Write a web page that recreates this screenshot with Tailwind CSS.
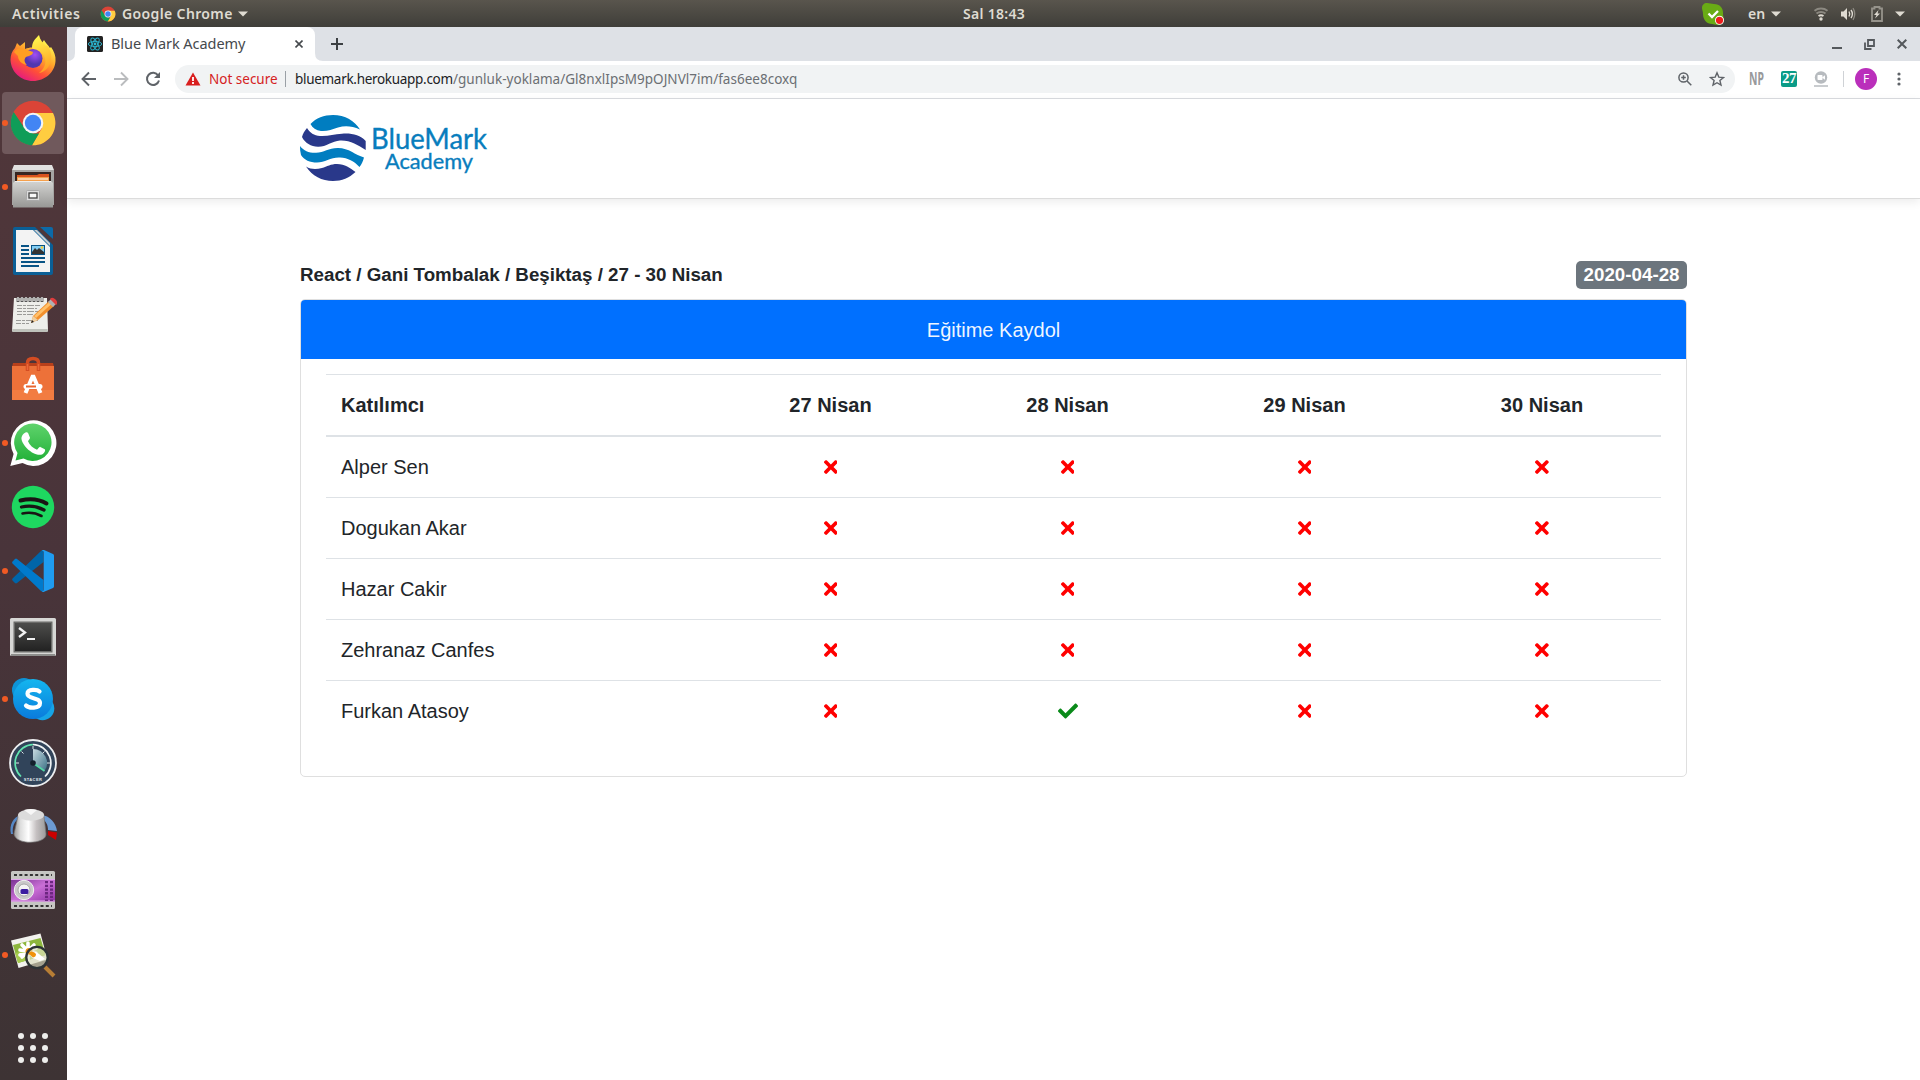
<!DOCTYPE html>
<html lang="tr">
<head>
<meta charset="utf-8">
<title>Blue Mark Academy</title>
<script src="https://cdn.jsdelivr.net/npm/@tailwindcss/browser@4"></script>
</head>
<body class="w-[1920px] h-[1080px] overflow-hidden flex flex-col bg-white">

<!-- System bar -->
<header class="h-[27px] shrink-0 flex items-center bg-linear-to-b from-[#59554d] to-[#3f3e39] text-[#dfdbd2] text-[14px] leading-[27px] font-semibold font-['Noto_Sans',sans-serif] whitespace-nowrap">
  <div class="w-[100px] pl-3"><span class="tracking-[0.6px]">Activities</span></div>
  <div class="w-[863px] flex items-center">
    <svg class="w-4 h-4 mr-[6px]" viewBox="0 0 48 48"><use href="#chrome"/></svg>
    <span class="w-[116px] tracking-[0.37px]">Google Chrome</span>
    <svg class="w-[10px] h-[6px]" viewBox="0 0 10 6"><path d="M0 0.500h10L5 5.500z" fill="#dfdbd2"/></svg>
  </div>
  <div class="w-[739px]"><span class="tracking-[0.3px]">Sal 18:43</span></div>
  <svg class="w-[22px] h-[22px] mr-6" viewBox="0 0 22 22"><path d="M5 0c3 0 4 1 7 1 6 0 9 4 9 9 0 4 1 5 1 7 0 3-3 5-6 5s-4-1-6-1C5 21 1 17 1 11 1 8 0 7 0 5c0-3 2-5 5-5z" fill="#69ab15"/><path d="M6.500 10.500l3.500 3.500 6-6" stroke="#fff" stroke-width="2.300" fill="none"/><circle cx="17.500" cy="17.300" r="4.500" fill="#fff"/><circle cx="17.500" cy="17.300" r="3.600" fill="#ee1c1c"/></svg>
  <span class="w-[23px]">en</span>
  <svg class="w-[10px] h-[6px] mr-[33px]" viewBox="0 0 10 6"><path d="M0 0.500h10L5 5.500z" fill="#dfdbd2"/></svg>
  <svg class="w-[14px] h-[14px] mr-[13px]" viewBox="0 0 14 14" fill="none" stroke-width="2"><path d="M.5 3.800C4 .8 10 .8 13.500 3.800M2.500 6.500C5 4.500 9 4.500 11.500 6.500" stroke="#8c8981"/><path d="M4.500 9Q7 7.500 9.500 9" stroke="#dfdbd2"/><circle cx="7" cy="12" r="1.700" fill="#dfdbd2"/></svg>
  <svg class="w-[15px] h-[14px] mr-[15px]" viewBox="0 0 15 14" fill="none"><path d="M0 4.500h2.500L6 1v12L2.500 9.500H0z" fill="#dfdbd2"/><path d="M8 4.500q1.500 2.500 0 5M10 3q2.800 4 0 8" stroke="#dfdbd2" stroke-width="1.400"/><path d="M12 1.200q3.500 5.800 0 11.600" stroke="#8c8981" stroke-width="1.300"/></svg>
  <svg class="w-3 h-4 mr-[12px]" viewBox="0 0 12 16"><path d="M3.500 1h5v1.500H11V15H1V2.500h2.500z" stroke="#96938b" stroke-width="1.800" fill="none"/><path d="M7.500 4L3 9h2.500L4 12.500 9 7.500H6.500z" fill="#dfdbd2"/></svg>
  <svg class="w-[10px] h-[6px]" viewBox="0 0 10 6"><path d="M0 0.500h10L5 5.500z" fill="#dfdbd2"/></svg>
</header>

<div class="flex flex-1 min-h-0">

<!-- Launcher -->
<nav class="w-[67px] shrink-0 flex flex-col bg-linear-to-b from-[#51373a] via-[#49343a] to-[#3d3334]">
  <!-- Firefox -->
  <div class="h-16 pl-[9px] flex items-center"><svg class="w-12 h-12" viewBox="0 0 48 48">
    <defs>
      <linearGradient id="ff1" x1=".85" y1=".1" x2=".25" y2="1"><stop stop-color="#fff44f"/><stop offset=".35" stop-color="#ffa62b"/><stop offset=".65" stop-color="#ff5037"/><stop offset="1" stop-color="#e31587"/></linearGradient>
      <linearGradient id="ff2" x1=".4" y1="0" x2=".6" y2="1"><stop stop-color="#fff84e"/><stop offset="1" stop-color="#ff9b22"/></linearGradient>
      <radialGradient id="ff3" cx=".6" cy=".3"><stop stop-color="#a24df5"/><stop offset="1" stop-color="#5137b0"/></radialGradient>
    </defs>
    <path d="M6 13L8 8l3 3 5-4v7c5-2 9-2 13 0l6-9c1 2 4 5 6 8l1-1c3 4 5 9 4.500 14C46 37 36 46 24 46S2 37 1.500 25C1.500 20 3 16 6 13z" fill="url(#ff1)"/>
    <path d="M23 13c0-6 3-9 7-13 1 5 4 8 7 11l1-1c3 4 5 9 4 15-1 7-6 12-12 13 7-5 9-14 3-20-3-3-8-3-10-5z" fill="url(#ff2)"/>
    <circle cx="24" cy="23.500" r="9.500" fill="url(#ff3)"/>
    <path d="M5 17c2-4 7-4 11-3l8 3c0 3-4 4-7 5-2 2-2 5 1 8-6-1-9-5-9-9z" fill="#ff9d22"/>
  </svg></div>
  <!-- Chrome -->
  <div class="h-16 flex items-center pl-[2px]"><div class="relative w-[62px] h-[62px] rounded bg-[#70595c] flex items-center pl-[7px]">
    <i class="absolute left-0 w-[5.500px] h-[5.500px] rounded-full bg-[#f15a24]"></i>
    <svg class="w-12 h-12" viewBox="0 0 48 48"><g id="chrome">
      <circle cx="24" cy="24" r="22.300" fill="#db4437"/>
      <path d="M24 14h20a22.300 22.300 0 0 1-21 32.300L33 29z" fill="#ffcd40"/>
      <path d="M4.700 12.900L15.400 29 24 34.500h6L23 46.300A22.300 22.300 0 0 1 4.700 12.900z" fill="#0f9d58"/>
      <circle cx="24" cy="24" r="10.300" fill="#f5f5f5"/><circle cx="24" cy="24" r="8.200" fill="#4285f4"/>
    </g></svg></div></div>
  <!-- Files -->
  <div class="relative h-16 pl-[9px] flex items-center"><i class="absolute left-[2px] w-[5.500px] h-[5.500px] rounded-full bg-[#f15a24]"></i>
  <svg class="w-12 h-12" viewBox="0 0 48 48">
    <defs><linearGradient id="steel" x1="0" y1="0" x2="0" y2="1"><stop stop-color="#d4d4d2"/><stop offset="1" stop-color="#979795"/></linearGradient></defs>
    <path d="M5 2h38l2 5H3z" fill="#e2e2e0"/><path d="M3 7h42v35H3z" fill="#a5a5a3"/>
    <path d="M6 9h36v11H6z" fill="#372622"/><path d="M8 12h20l2-1h10v4H8z" fill="#d9531e"/><path d="M8 14h32v5H8z" fill="#f5a04c"/><path d="M9 15.500h30v1H9z" fill="#fff"/>
    <path d="M6 18h36l2 2v24.500H4V20z" fill="url(#steel)"/><path d="M6 18.500h36" stroke="#eee"/>
    <rect x="17.500" y="27.500" width="13" height="10" rx="1" fill="#ddd" stroke="#aaa"/><rect x="20" y="30" width="8" height="5" fill="#f8f8f8" stroke="#444" stroke-width="1.300"/>
  </svg></div>
  <!-- Writer -->
  <div class="h-16 pl-[9px] flex items-center"><svg class="w-12 h-12" viewBox="0 0 48 48">
    <path d="M6 0h20l18 18v28a2 2 0 0 1-2 2H6a2 2 0 0 1-2-2V2a2 2 0 0 1 2-2z" fill="#0a5f96"/><path d="M31 0h11a2 2 0 0 1 2 2v10z" fill="#0c6aa8"/>
    <path d="M7 3h17l17 17v25H7z" fill="#f3f3f3"/><path d="M25 3l16 16v-3L28 3z" fill="#c9cdd0"/>
    <path d="M12 19h8M12 23h8M12 27h8M12 31h24M12 35h24M12 39h18" stroke="#085385" stroke-width="2"/>
    <rect x="22.500" y="18.500" width="13" height="9" fill="#83cdf3" stroke="#085385"/><path d="M23 27v-2l3-4 2 2 2-2 5 4v2z" fill="#333"/><circle cx="33" cy="20.500" r="1.300" fill="#fc3"/>
  </svg></div>
  <!-- Text editor -->
  <div class="h-16 pl-[9px] flex items-center"><svg class="w-12 h-12" viewBox="0 0 48 48">
    <path d="M5 7h33l1 33H3z" fill="#edeeea"/><path d="M3.200 38h35.600v3H3.200z" fill="#bfc2bb"/>
    <path d="M9 6v5M13 6v5M17 6v5M21 6v5M25 6v5M29 6v5M33 6v5" stroke="#555" stroke-width="2.800"/><path d="M9 6v4M13 6v4M17 6v4M21 6v4M25 6v4M29 6v4M33 6v4" stroke="#d9d9d9" stroke-width="1.400"/>
    <path d="M8 14.500h24M8 17.500h20M8 20.500h22M8 23.500h16M7 29.500h22M7 32.500h13" stroke="#9b9b98" stroke-width="1" stroke-dasharray="5 1 3 1 7 1"/>
    <path d="M22 32l2-7L40 10l5 5-16 14z" fill="#f28f2c"/><path d="M25 25L40.500 11l2 2L27 27z" fill="#ffc06a"/><path d="M22 32l2-7 5 4z" fill="#efcfa0"/><path d="M22 32l1-3 2 2z" fill="#222"/>
    <path d="M39 11l3-3 5 5-3 3z" fill="#aeb1b3"/><path d="M42 8c2-2 7 3 5 5z" fill="#e03d3d" stroke="#e03d3d" stroke-width="1.500"/>
  </svg></div>
  <!-- Software -->
  <div class="h-16 pl-[9px] flex items-center"><svg class="w-12 h-12" viewBox="0 0 48 48">
    <path d="M4 8h40l1 4H3z" fill="#b8401b"/><path d="M3 11h42v34H3z" fill="#ed7139"/><path d="M3 35h42v10H3z" fill="#f27c41"/>
    <path d="M18.500 16V8q0-4.500 5.500-4.500T29.500 8v8" stroke="#d34c22" stroke-width="3.500" fill="none"/><path d="M18.500 15V9M29.500 15V9" stroke="#e9683a" stroke-width="1.500"/>
    <path d="M16.500 38L24 20.500 31.500 38" stroke="#fff" stroke-width="4" fill="none" stroke-linejoin="bevel"/><rect x="14.500" y="29" width="19" height="5" rx="2.500" fill="#fff"/><path d="M17 31.500h10" stroke="#e8652f" stroke-width="2"/>
  </svg></div>
  <!-- WhatsApp -->
  <div class="relative h-16 pl-[9px] flex items-center"><i class="absolute left-[2px] w-[5.500px] h-[5.500px] rounded-full bg-[#f15a24]"></i>
  <svg class="w-12 h-12" viewBox="0 0 48 48">
    <defs><linearGradient id="wa" x1="0" y1="0" x2="0" y2="1"><stop stop-color="#5fd36c"/><stop offset="1" stop-color="#23b139"/></linearGradient></defs>
    <path d="M1.300 47l3.300-12A22.800 22.800 0 1 1 13.500 44z" fill="#fff"/><path d="M6.500 41.500l2-7.500A18.700 18.700 0 1 1 14.500 39.500z" fill="url(#wa)"/>
    <path d="M16.500 13.500c1-.4 2.200-.3 2.700.8l1.800 4.500c.3.900-1.800 2.700-2 3.500 1.600 4 5.200 7 9 8.400 1-.3 2.200-3.200 3.300-2.800l4.500 2.300c1 .8-.2 4.200-2.800 5.200-2.300 1-6 .2-10-2-5-2.800-10-9-10.500-13.300-.2-3 1.800-5.800 4-6.600z" fill="#fff"/>
  </svg></div>
  <!-- Spotify -->
  <div class="h-16 pl-[9px] flex items-center"><svg class="w-12 h-12" viewBox="0 0 48 48">
    <circle cx="24" cy="24" r="21.200" fill="#1ed760"/><g fill="none" stroke="#191414" stroke-linecap="round"><path d="M11.500 17.500q15-3.500 26 3" stroke-width="4"/><path d="M12.500 24q12.500-2.500 22.500 3" stroke-width="3.300"/><path d="M13.500 30.500q10.500-2.200 19 2.500" stroke-width="2.600"/></g>
  </svg></div>
  <!-- VS Code -->
  <div class="relative h-16 pl-[9px] flex items-center"><i class="absolute left-[2px] w-[5.500px] h-[5.500px] rounded-full bg-[#f15a24]"></i>
  <svg class="w-12 h-12" viewBox="0 0 48 48">
    <path d="M34.500 3v12L8 36a1.500 1.500 0 0 1-2 0l-2.500-2.500a1.500 1.500 0 0 1 0-2L32 4z" fill="#0065a9"/>
    <path d="M34.500 45V33L8 12a1.500 1.500 0 0 0-2 0l-2.500 2.500a1.500 1.500 0 0 0 0 2L32 44z" fill="#007acc"/>
    <path d="M34.500 45c-1 0-2-.500-2.500-1 1 1 2.700 0 2.700-1.300V5.300C34.700 4 33 3 32 4c.5-.5 1.500-1.300 3-1l9 4c.6.300 1 1 1 1.800v30.400c0 .8-.4 1.500-1 1.800z" fill="#1f9cf0"/>
  </svg></div>
  <!-- Terminal -->
  <div class="h-16 pl-[9px] flex items-center"><svg class="w-12 h-12" viewBox="0 0 48 48">
    <defs><linearGradient id="tm" x1="0" y1="0" x2="0" y2="1"><stop stop-color="#4d4d4b"/><stop offset="1" stop-color="#222"/></linearGradient></defs>
    <rect x="1" y="7" width="46" height="38" rx="1.500" fill="#d7d7d5"/><path d="M2 43h44v2H2z" fill="#8d8d8b"/><rect x="4.500" y="10.500" width="39" height="31" fill="#6b6b69"/><rect x="6" y="12" width="36" height="28" fill="url(#tm)"/>
    <path d="M10 17l6 4.500-6 4.500" fill="none" stroke="#f2f2f2" stroke-width="2.300"/><path d="M18 28h8" stroke="#f2f2f2" stroke-width="2"/>
  </svg></div>
  <!-- Skype -->
  <div class="relative h-16 pl-[9px] flex items-center"><i class="absolute left-[2px] w-[5.500px] h-[5.500px] rounded-full bg-[#f15a24]"></i>
  <svg class="w-12 h-12" viewBox="0 0 48 48">
    <defs><linearGradient id="sk" x1="0" y1="0" x2="0" y2="1"><stop stop-color="#14b6ef"/><stop offset="1" stop-color="#0a7bdc"/></linearGradient></defs>
    <circle cx="15" cy="15" r="12" fill="#0e93d6"/><circle cx="33.500" cy="33.500" r="11.800" fill="#16a4e6"/><circle cx="24" cy="24" r="20" fill="url(#sk)"/>
    <path d="M30.500 16.500c-2-2-12-3-12 2.300 0 5.700 12.500 3 12.500 9.200 0 6-11.500 5.300-14 2.500" fill="none" stroke="#fff" stroke-width="4.200" stroke-linecap="round"/>
  </svg></div>
  <!-- Stacer -->
  <div class="h-16 pl-[9px] flex items-center"><svg class="w-12 h-12" viewBox="0 0 48 48">
    <defs><linearGradient id="st" x1="0" y1="0" x2="1" y2="1"><stop stop-color="#c9dbe2"/><stop offset="1" stop-color="#3c7186"/></linearGradient></defs>
    <circle cx="24" cy="24" r="23" fill="#31445a" stroke="#eceef0" stroke-width="1.800"/>
    <path d="M24 24V10a14 14 0 0 1 11.500 22z" fill="url(#st)"/>
    <path d="M12 37.500A18.500 18.500 0 0 1 24 5.500" stroke="#62e5b0" stroke-width="1.700" fill="none"/><path d="M24 5.500A18.500 18.500 0 0 1 36 37.500" stroke="#eef2f4" stroke-width="1.700" fill="none"/>
    <path d="M24 7v3M7 24h3M41 24h-3M12.500 12.500l2 2M35.500 12.500l-2 2" stroke="#dfe6ea" stroke-width="1"/><path d="M24 24l11.500 8" stroke="#53d6a5" stroke-width="1.700"/><circle cx="24" cy="24" r="2.800" fill="#14202c"/>
    <text x="24" y="41.500" text-anchor="middle" font-family="Liberation Sans, sans-serif" font-weight="700" font-size="4" letter-spacing=".4" fill="#e2e8ec">STACER</text>
  </svg></div>
  <!-- Volume knob -->
  <div class="h-16 pl-[9px] flex items-center"><svg class="w-12 h-12" viewBox="0 0 48 48">
    <defs><linearGradient id="kn"><stop stop-color="#959595"/><stop offset=".2" stop-color="#ddd"/><stop offset=".45" stop-color="#fff"/><stop offset=".7" stop-color="#c5c0c1"/><stop offset="1" stop-color="#9a9a9a"/></linearGradient></defs>
    <path d="M2 31C0 22 4 14 12 12l-1 3C5 18 3 24 4 31z" fill="#5688c5"/><path d="M33 12c8 1 14 8 15 16l-9-1c0-5-2-9-6-11z" fill="#6c9ad2"/><path d="M39 28l9 1.500-1 7.500-8-5z" fill="#cc0000"/>
    <path d="M9 13c1-7 26-9 26 0l2 18c1 10-30 12-32 0z" fill="url(#kn)" stroke="#777" stroke-width=".7"/><ellipse cx="22" cy="12" rx="13" ry="5.800" fill="#dcdcdc"/><path d="M22 12l-7-5q7-2 13 0z" fill="#f7f7f7"/>
  </svg></div>
  <!-- Screen recorder -->
  <div class="h-16 pl-[9px] flex items-center"><svg class="w-12 h-12" viewBox="0 0 48 48">
    <defs><linearGradient id="rec" x1="0" y1="0" x2="1" y2="1"><stop stop-color="#773291"/><stop offset=".5" stop-color="#ca6fd6"/><stop offset="1" stop-color="#8f34a5"/></linearGradient></defs>
    <rect x="2" y="4" width="44" height="38" rx="1.500" fill="#c6c6c3"/><path d="M5 8h38M5 39h38" stroke="#333" stroke-width="2" stroke-dasharray="3 2.300"/>
    <path d="M2 12h44v22.500H2z" fill="url(#rec)"/><path d="M2 12.500h44M2 34h44" stroke="#e3a8ed" stroke-width="1"/>
    <path d="M37.500 14v20M42.500 14v20" stroke="#6c2680" stroke-width="3" stroke-dasharray="2.300 1.400"/>
    <circle cx="15" cy="23" r="9.700" fill="#c9c9c9" stroke="#f2f2f2" stroke-width="1"/><circle cx="15" cy="23" r="6" fill="#f4f4f4" stroke="#999" stroke-width=".8"/><rect x="11.500" y="22" width="8" height="5" rx="1.500" fill="#3b1ca0"/>
  </svg></div>
  <!-- Image viewer -->
  <div class="relative h-16 pl-[9px] flex items-center"><i class="absolute left-[2px] w-[5.500px] h-[5.500px] rounded-full bg-[#f15a24]"></i>
  <svg class="w-12 h-12" viewBox="0 0 48 48">
    <path d="M2 9.500L31.500 2.500l7 26L9.500 37z" fill="#f2f2ee"/><path d="M4 14L31.500 7l5 17L9 32z" fill="#8cb63c"/><path d="M6 22l28-6 2.500 8L9 32z" fill="#a5cb4e"/>
    <g stroke="#fff" stroke-width="3.600" stroke-linecap="round"><path d="M11 19l16 3M13 14l12 12M19 12v18M25 14L13 26M11 24l16-7"/></g><circle cx="20" cy="20.500" r="3.500" fill="#f0920b"/>
    <path d="M36 36l9 9" stroke="#b77e35" stroke-width="4"/><circle cx="28" cy="26.500" r="10.500" fill="#d9dbbd" fill-opacity=".65"/><path d="M20 22q6-3 10 1l6 5-5 2-7-3z" fill="#fff"/><path d="M19 22q5-3 8 1 0 3-3 3.500z" fill="#f0920b"/><circle cx="28" cy="26.500" r="10.700" fill="none" stroke="#2c3335" stroke-width="2.300"/>
  </svg></div>
  <!-- App grid -->
  <svg class="w-[30px] h-[30px] ml-[18px] mt-[46px]" viewBox="0 0 30 30" fill="#eeeeec"><circle cx="3" cy="3" r="3"/><circle cx="15" cy="3" r="3"/><circle cx="27" cy="3" r="3"/><circle cx="3" cy="15" r="3"/><circle cx="15" cy="15" r="3"/><circle cx="27" cy="15" r="3"/><circle cx="3" cy="27" r="3"/><circle cx="15" cy="27" r="3"/><circle cx="27" cy="27" r="3"/></svg>
</nav>

<!-- Browser window -->
<main class="flex-1 min-w-0 flex flex-col">
  <!-- Tab strip -->
  <div class="h-[34px] shrink-0 flex items-stretch bg-[#dee1e6] pr-[13px] font-['Noto_Sans',sans-serif]">
    <svg class="w-2 h-[34px]" viewBox="0 0 8 34"><path d="M0 34q8 0 8-8v8z" fill="#fff"/></svg>
    <div class="w-[240px] h-[34px] bg-white rounded-t-lg pl-3 flex items-center">
      <svg class="w-4 h-4 mr-2" viewBox="0 0 16 16"><rect width="16" height="16" rx="1.500" fill="#222"/><g fill="none" stroke="#2bb7d3" stroke-width=".9"><ellipse cx="8" cy="8" rx="6.700" ry="2.600"/><ellipse cx="8" cy="8" rx="6.700" ry="2.600" transform="rotate(60 8 8)"/><ellipse cx="8" cy="8" rx="6.700" ry="2.600" transform="rotate(120 8 8)"/></g><circle cx="8" cy="8" r="1.400" fill="#2bb7d3"/></svg>
      <span class="w-[184px] text-[14.500px] text-[#45494d] tracking-[-0.05px] whitespace-nowrap">Blue Mark Academy</span>
      <svg class="w-2 h-2 shrink-0" viewBox="0 0 8 8"><path d="M.5.5l7 7m0-7l-7 7" stroke="#45494d" stroke-width="1.600"/></svg>
    </div>
    <svg class="w-2 h-[34px]" viewBox="0 0 8 34"><path d="M0 26q0 8 8 8H0z" fill="#fff"/></svg>
    <svg class="w-3 h-3 ml-2 self-center" viewBox="0 0 12 12"><path d="M6 0v12M0 6h12" stroke="#3c4043" stroke-width="2"/></svg>
    <div class="ml-auto flex items-center gap-[22px]">
      <svg class="w-[10px] h-[10px]" viewBox="0 0 10 10"><path d="M0 9h10" stroke="#54585c" stroke-width="2"/></svg>
      <svg class="w-[11px] h-[11px]" viewBox="0 0 11 11" fill="none" stroke="#54585c" stroke-width="1.800"><path d="M4 1h6v6H4zM1 3.500V10h6.500"/></svg>
      <svg class="w-[10px] h-[10px]" viewBox="0 0 10 10"><path d="M.7.7l8.600 8.600m0-8.600L.7 9.300" stroke="#54585c" stroke-width="2"/></svg>
    </div>
  </div>
  <!-- Address bar -->
  <div class="h-[38px] shrink-0 flex items-center border-b border-[#dadce0] pl-[14px] pb-px font-['Noto_Sans',sans-serif]">
    <svg class="w-4 h-4 mr-4" viewBox="0 0 16 16" fill="none" stroke="#5f6368" stroke-width="1.900"><path d="M15 8H2M8 1.500L1.500 8 8 14.500"/></svg>
    <svg class="w-4 h-4 mr-4" viewBox="0 0 16 16" fill="none" stroke="#babcbe" stroke-width="1.900"><path d="M1 8h13M8 1.500L14.500 8 8 14.500"/></svg>
    <svg class="w-4 h-4 mr-[14px]" viewBox="0 0 16 16"><path d="M13.200 4.500A6.100 6.100 0 1 0 14 9.500" fill="none" stroke="#5f6368" stroke-width="2"/><path d="M15 1v6H9z" fill="#5f6368"/></svg>
    <div class="w-[1560px] h-7 rounded-full bg-[#f1f3f4] pl-[10px] pr-[10px] flex items-center text-[13.500px] whitespace-nowrap">
      <svg class="w-4 h-[14px] mr-2" viewBox="0 0 16 14"><path d="M8 .5L15.500 13.500H.5z" fill="#d91f1f"/><path d="M8 5v4M8 10v2" stroke="#fff" stroke-width="1.800"/></svg>
      <span class="w-[76px] text-[#d5221f]">Not secure</span>
      <i class="w-px h-4 bg-[#9aa0a6] mr-[9px]"></i>
      <span class="w-[158px] text-[#202124] tracking-[-0.3px]">bluemark.herokuapp.com</span><span class="text-[#6b6f73] tracking-[0.02px]">/gunluk-yoklama/Gl8nxlIpsM9pOJNVl7im/fas6ee8coxq</span>
      <svg class="w-[14px] h-[14px] ml-auto mr-[17px]" viewBox="0 0 14 14" fill="none" stroke="#5f6368" stroke-width="1.500"><circle cx="5.500" cy="5.500" r="4.600"/><path d="M9 9l4.300 4.300M3.200 5.500h4.600M5.500 3.200v4.600"/></svg>
      <svg class="w-4 h-4" viewBox="0 0 16 16"><path d="M8 1.800l1.800 4.300 4.700.4-3.600 3 1.100 4.600L8 11.700l-4 2.400 1.100-4.600-3.600-3 4.700-.4z" fill="none" stroke="#5f6368" stroke-width="1.400"/></svg>
    </div>
    <span class="w-[16px] ml-[14px] mr-4 text-[17px] leading-6 font-bold text-[#98999b]"><span class="inline-block origin-left scale-x-[0.61]">NP</span></span>
    <span class="w-4 h-4 rounded-xs bg-[#0b9b87] text-white text-[15px] leading-[14px] font-bold text-center tracking-[-0.500px] font-['Liberation_Serif',serif]">27</span>
    <svg class="w-4 h-4 ml-4" viewBox="0 0 16 16"><circle cx="8" cy="6.500" r="6.200" fill="#b7bbbf"/><rect x="4.500" y="4" width="5" height="5" rx=".8" fill="#fff"/><path d="M9 6.500l3-2.200v4.400z" fill="#fff"/><path d="M1 15h14" stroke="#b7bbbf" stroke-width="1.500"/></svg>
    <i class="w-px h-4 bg-[#cfd2d6] ml-[14px] mr-[11px]"></i>
    <span class="w-[22px] h-[22px] rounded-full bg-[#ba2fbb] text-white text-[12px] leading-[22px] text-center">F</span>
    <svg class="w-1 h-[14px] ml-5" viewBox="0 0 4 14" fill="#5f6368"><circle cx="2" cy="2" r="1.600"/><circle cx="2" cy="7" r="1.600"/><circle cx="2" cy="12" r="1.600"/></svg>
  </div>

  <!-- Page -->
  <div class="flex-1 min-h-0 flex flex-col text-[#212529] font-['Liberation_Sans',Arial,sans-serif]">
    <div class="h-[100px] shrink-0 border-b border-[#dcdcdc] shadow-[0_3px_9px_rgba(0,0,0,0.08)] pl-[233px] pt-4">
      <svg class="w-[190px] h-[67px]" viewBox="0 0 190 67">
        <g>
          <path d="M10.500 9C16 3 24 0 33 0c12 0 22 6 27 14.500C52 11 45 10.500 38 12.500c-6 2-11 4-17 3.500C16 15.500 12.500 13 10.500 9z" fill="#007dc0"/>
          <path d="M7 13c3 5 7 7.500 13 8 8 .5 14-2 22-2.300C52 18 60 20 65.700 26v9C58 30 50 25 40 25.500c-8 .5-14 6.500-22 6.300C11 31.500 5 28 2 22 3 18.500 4.500 16 7 13z" fill="#29388a"/>
          <path d="M0 31c4 5 9 7 16 6.800 8-.2 13-5 22-4.800 11 0 17 7 26 9.500-1 4-2.500 7-4.500 9.500C54 46 48 43 40 42.500c-9-.5-15 5-23 5C10 47.500 4 45 1 40 .2 37 0 34 0 31z" fill="#007dc0"/>
          <path d="M6 51.500c5 3 10 3 16 1.500 5-1.500 9-4 15-4 8 0 13 4 18.500 8C49 63 42 66 33 66c-11 0-21-5-27-14.500z" fill="#29388a"/>
        </g>
        <g fill="#087dbd" stroke="#087dbd" stroke-width=".35" font-family="Lato, sans-serif">
          <text x="71" y="34" font-size="28" textLength="116" lengthAdjust="spacingAndGlyphs">BlueMark</text>
          <text x="85" y="53.500" font-size="21" textLength="88" lengthAdjust="spacingAndGlyphs">Academy</text>
        </g>
      </svg>
    </div>

    <section class="ml-[233px] w-[1387px] mt-[62px]">
      <div class="h-7 flex items-center justify-between font-bold text-[18.750px]">
        <h5>React / Gani Tombalak / Beşiktaş / 27 - 30 Nisan</h5>
        <span class="h-7 px-[7.500px] rounded-[5px] bg-[#6c757d] text-white leading-7">2020-04-28</span>
      </div>
      <div class="mt-[10px] h-[478px] border border-[#dfdfdf] rounded-[5px] overflow-hidden text-[20px] leading-[30px]">
        <div class="h-[59px] bg-[#0070ff] text-white/95 text-center leading-[60px]">Eğitime Kaydol</div>
        <table class="ml-[25px] mt-[15px] w-[1335px] table-fixed border-collapse text-center">
          <colgroup><col class="w-[386px]"><col class="w-[237px]"><col class="w-[237px]"><col class="w-[237px]"><col></colgroup>
          <thead><tr class="h-[61px] border-t border-b-2 border-t-[#dee2e6] border-b-[#dee2e6]"><th class="pl-[15px] text-left">Katılımcı</th><th>27 Nisan</th><th>28 Nisan</th><th>29 Nisan</th><th>30 Nisan</th></tr></thead>
          <tbody id="rows"></tbody>
        </table>
      </div>
    </section>
  </div>
</main>
</div>

<script>
const cross = '<svg class="inline-block w-[13.750px] h-5 align-[-3px]" viewBox="0 0 352 512"><path fill="#f00" d="M242.720 256l100.070-100.070c12.280-12.280 12.280-32.190 0-44.480l-22.240-22.240c-12.280-12.280-32.190-12.280-44.480 0L176 189.280 75.930 89.210c-12.280-12.280-32.190-12.280-44.480 0L9.210 111.450c-12.280 12.280-12.280 32.190 0 44.480L109.280 256 9.210 356.070c-12.280 12.280-12.280 32.190 0 44.480l22.240 22.240c12.280 12.280 32.200 12.280 44.480 0L176 322.720l100.070 100.070c12.280 12.280 32.200 12.280 44.480 0l22.240-22.240c12.280-12.280 12.280-32.190 0-44.480L242.720 256z"/></svg>';
const check = '<svg class="inline-block w-5 h-5 align-[-3px]" viewBox="0 0 512 512"><path fill="#0a8a1a" d="M173.898 439.404l-166.400-166.400c-9.997-9.997-9.997-26.206 0-36.204l36.203-36.204c9.997-9.998 26.207-9.998 36.204 0L192 312.690 432.095 72.596c9.997-9.997 26.207-9.997 36.204 0l36.203 36.204c9.997 9.997 9.997 26.206 0 36.204l-294.400 294.401c-9.998 9.997-26.207 9.997-36.204-.001z"/></svg>';
const people = [['Alper Sen',0,0,0,0],['Dogukan Akar',0,0,0,0],['Hazar Cakir',0,0,0,0],['Zehranaz Canfes',0,0,0,0],['Furkan Atasoy',0,1,0,0]];
document.getElementById('rows').innerHTML = people.map(([name, ...days]) =>
  `<tr class="h-[61px] first:h-[62px] first:*:pt-px border-b border-[#dee2e6] last:border-b-0"><td class="pl-[15px] text-left">${name}</td>${days.map(d => `<td>${d ? check : cross}</td>`).join('')}</tr>`).join('');
</script>
</body>
</html>
